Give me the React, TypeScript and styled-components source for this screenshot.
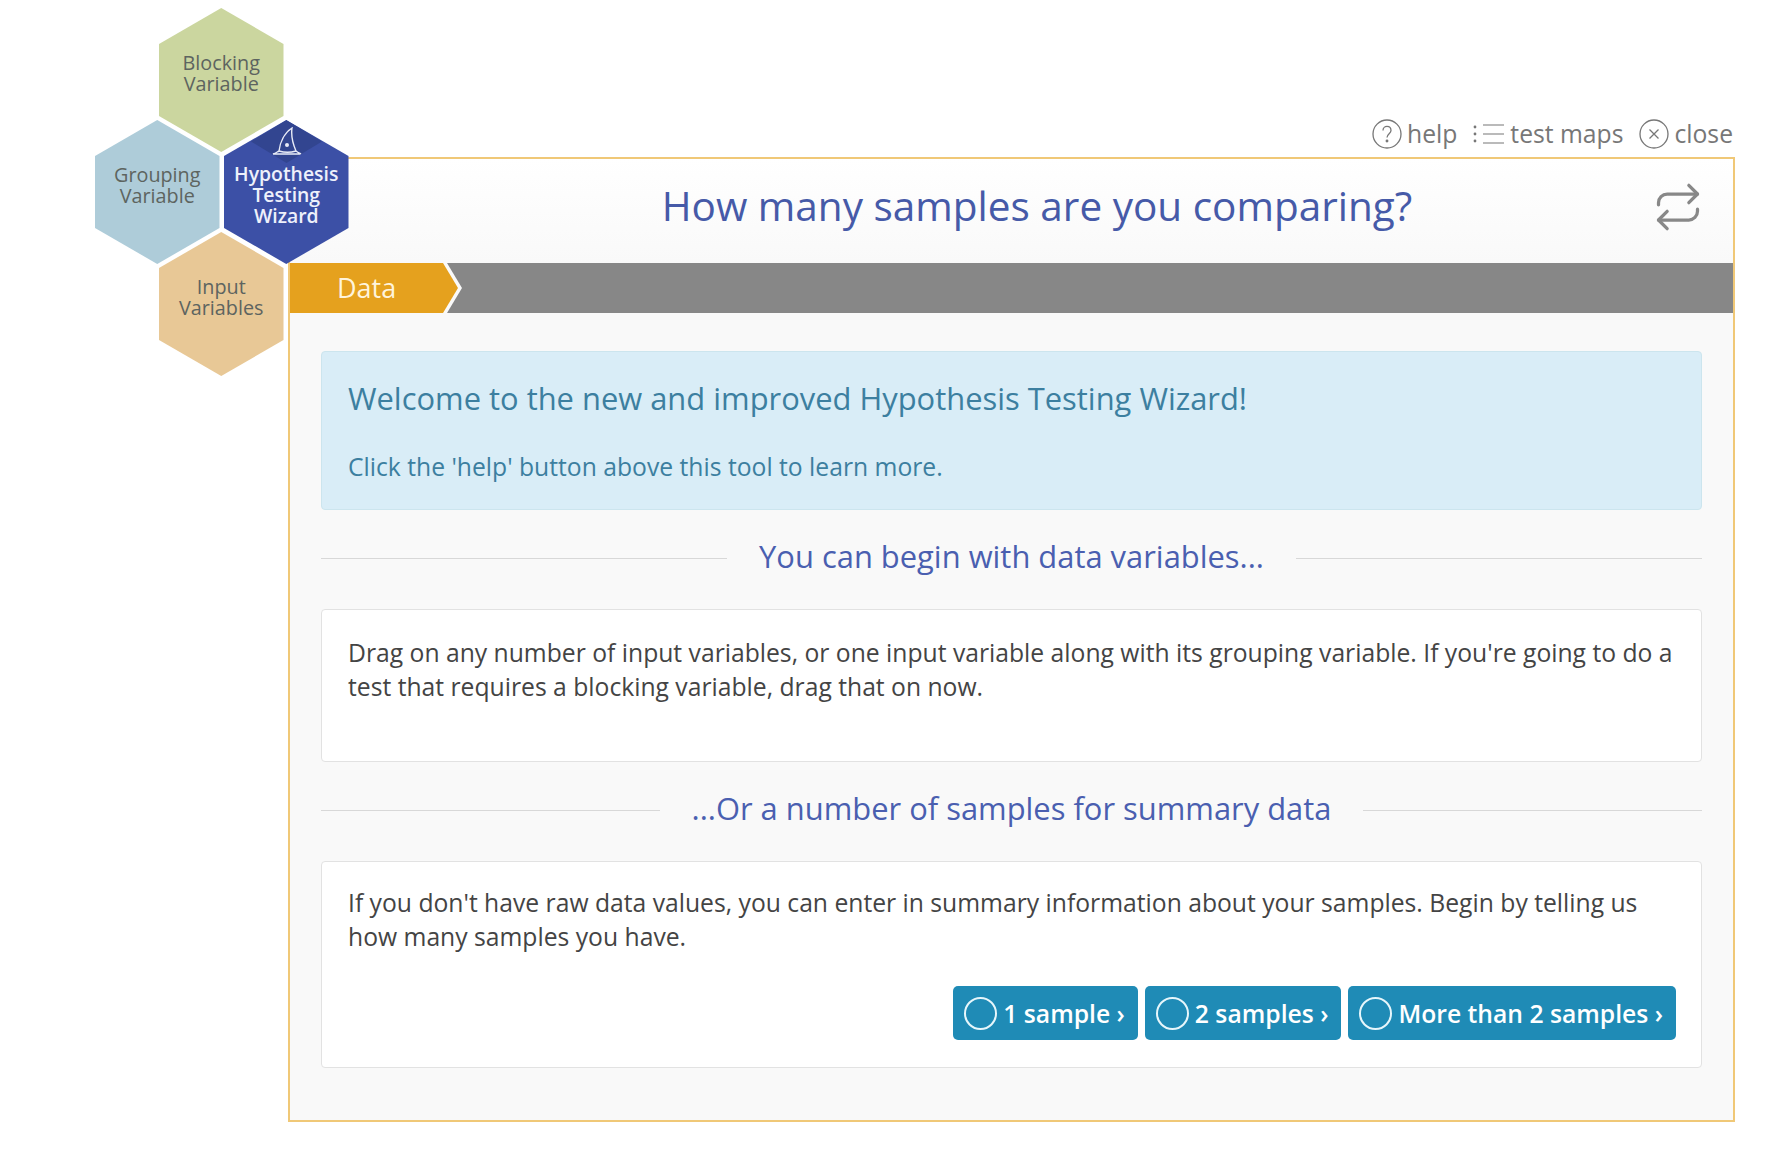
import React from 'react';
import styled, { createGlobalStyle } from 'styled-components';
import { Repeat } from 'lucide-react';

const GlobalStyle = createGlobalStyle`
  html, body {
    margin: 0;
    padding: 0;
    background: #fff;
    font-family: "Open Sans", "Noto Sans", sans-serif;
  }
`;

const Page = styled.div`
  position: relative;
  width: 1792px;
  height: 1152px;
  padding: 117px 57px 0 288px;
  box-sizing: border-box;
  overflow: hidden;
`;

const TopLinks = styled.div`
  display: flex;
  justify-content: flex-end;
  align-items: center;
  height: 40px;
  padding: 0 2px 6px 0;
  box-sizing: border-box;
`;

const TopLink = styled.div`
  display: flex;
  align-items: center;
  gap: 5px;
  margin-left: 16px;
  font-size: 24.7px;
  color: #777;
  line-height: 32px;
`;

const Panel = styled.section`
  height: 965px;
  border: 2px solid #f0c877;
  box-sizing: border-box;
  background: #f9f9f9;
`;

const Header = styled.header`
  display: flex;
  align-items: center;
  height: 104px;
  padding: 0 29px 12px 132px;
  box-sizing: border-box;
  background: linear-gradient(#fff, #f9f9f9);
`;

const Title = styled.h1`
  flex: 1;
  margin: 0;
  text-align: center;
  font-size: 40.5px;
  font-weight: 400;
  color: #465aa8;
`;

const SwapIcon = styled(Repeat)`
  margin-top: 4px;
`;

const StepBar = styled.div`
  height: 50px;
  background: #878787;
`;

const StepEdge = styled.div`
  width: 172px;
  height: 100%;
  background: #fafafa;
  clip-path: polygon(0 0, 157px 0, 100% 50%, 157px 100%, 0 100%);
`;

const StepTab = styled.div`
  width: 168px;
  height: 100%;
  padding-left: 47px;
  box-sizing: border-box;
  background: #e5a11e;
  clip-path: polygon(0 0, 153px 0, 100% 50%, 153px 100%, 0 100%);
  color: #fff4dc;
  font-size: 27px;
  font-weight: 500;
  line-height: 50px;
`;

const Content = styled.div`
  padding: 38px 31px 0;
`;

const Alert = styled.div`
  height: 159px;
  padding: 25px 26px 0;
  box-sizing: border-box;
  background: #d9edf7;
  border: 1px solid #cce5ee;
  border-radius: 4px;
  color: #3c7fa0;
`;

const AlertTitle = styled.div`
  font-size: 30.9px;
  line-height: 42px;
`;

const AlertText = styled.div`
  margin-top: 31px;
  font-size: 24.7px;
  line-height: 34px;
`;

const Divider = styled.div`
  display: flex;
  align-items: center;
  gap: 32px;
  height: 99px;
  padding-bottom: 2px;
  box-sizing: border-box;
  color: #4a5fb0;
  font-size: 30.9px;
  white-space: nowrap;

  &::before,
  &::after {
    content: '';
    flex: 1;
    height: 1px;
    background: #d8d8d8;
  }
`;

const DividerText = styled.span`
  margin-bottom: 5px;
`;

const Card = styled.div<{ $height: number; $top: number }>`
  height: ${(p) => p.$height}px;
  padding: ${(p) => p.$top}px 20px 0 26px;
  box-sizing: border-box;
  background: #fff;
  border: 1px solid #e2e2e2;
  border-radius: 4px;
  color: #444;
  font-size: 24.7px;
  line-height: 34px;
`;

const ButtonRow = styled.div`
  display: flex;
  justify-content: flex-end;
  gap: 7px;
  margin: 32px 5px 0 0;
`;

const SampleButton = styled.button`
  display: flex;
  align-items: center;
  gap: 6px;
  height: 54px;
  padding: 0 13px 0 11px;
  border: 0;
  border-radius: 5px;
  background: #1f8bb6;
  color: #fff;
  font-family: inherit;
  font-size: 24.7px;
  font-weight: 600;
`;

const Radio = styled.span`
  width: 33px;
  height: 33px;
  box-sizing: border-box;
  border: 2px solid #e6f6fb;
  border-radius: 50%;
`;

const Hex = styled.div<{ $left: number; $top: number; $bg: string }>`
  position: absolute;
  left: ${(p) => p.$left}px;
  top: ${(p) => p.$top}px;
  width: 124.5px;
  height: 144px;
  padding-bottom: 14px;
  box-sizing: border-box;
  display: flex;
  align-items: center;
  justify-content: center;
  text-align: center;
  background: ${(p) => p.$bg};
  clip-path: polygon(50% 0, 100% 25%, 100% 75%, 50% 100%, 0 75%, 0 25%);
  color: #5d6460;
  font-size: 19.8px;
  line-height: 21px;
`;

const WizardHex = styled(Hex)`
  padding: 5px 0 0;
  color: #eef1fb;
  font-weight: 600;
  font-size: 19.4px;
  line-height: 21px;
`;

const HatBadge = styled.div`
  position: absolute;
  top: 0;
  left: 27px;
  width: 71px;
  height: 43px;
  display: flex;
  align-items: center;
  justify-content: center;
  background: #324590;
  clip-path: polygon(50% 0, 100% 50%, 50% 100%, 0 50%);
`;

const CircleIcon = ({ children }: { children: React.ReactNode }) => (
  <svg width="30" height="30" viewBox="0 0 30 30" fill="none" stroke="#777" strokeWidth="1.3">
    <circle cx="15" cy="15" r="14" />
    {children}
  </svg>
);

const ListIcon = () => (
  <svg width="32" height="24" viewBox="0 0 32 24" fill="none" stroke="#777" strokeWidth="1.2">
    <circle cx="2" cy="5" r="1.4" fill="#777" stroke="none" />
    <circle cx="2" cy="12" r="1.4" fill="#777" stroke="none" />
    <circle cx="2" cy="19" r="1.4" fill="#777" stroke="none" />
    <path d="M10 3h21M10 12h21M10 21h21" />
  </svg>
);

const HatIcon = () => (
  <svg width="30" height="29" viewBox="0 0 30 29" fill="none" stroke="#e8ebf7" strokeWidth="1.4">
    <path d="M1 27c3-1 4-2 6-3 1-8 5-18 13-23-1 7 1 16 4 23 1 1 3 2 5 3z" />
    <path d="M7 24c5 1.500 12 1.500 17 0" />
    <circle cx="15" cy="18" r="2" fill="#e8ebf7" stroke="none" />
  </svg>
);

const SAMPLE_OPTIONS = ['1 sample ›', '2 samples ›', 'More than 2 samples ›'];

export default function App() {
  return (
    <Page>
      <GlobalStyle />
      <TopLinks>
        <TopLink>
          <CircleIcon>
            <path d="M11 11.500c0-5.500 8-5.500 8 0 0 3-4 3.500-4 7" />
            <circle cx="15" cy="22" r=".8" fill="#777" />
          </CircleIcon>
          help
        </TopLink>
        <TopLink>
          <ListIcon />
          test maps
        </TopLink>
        <TopLink>
          <CircleIcon>
            <path d="M10.500 10.500l9 9M19.500 10.500l-9 9" />
          </CircleIcon>
          close
        </TopLink>
      </TopLinks>
      <Panel>
        <Header>
          <Title>How many samples are you comparing?</Title>
          <SwapIcon size={52} color="#888" strokeWidth={1.5} />
        </Header>
        <StepBar>
          <StepEdge>
            <StepTab>Data</StepTab>
          </StepEdge>
        </StepBar>
        <Content>
          <Alert>
            <AlertTitle>Welcome to the new and improved Hypothesis Testing Wizard!</AlertTitle>
            <AlertText>Click the 'help' button above this tool to learn more.</AlertText>
          </Alert>
          <Divider>
            <DividerText>You can begin with data variables...</DividerText>
          </Divider>
          <Card $height={153} $top={26}>
            Drag on any number of input variables, or one input variable along with its grouping variable. If you're going to do a test that requires a blocking variable, drag that on now.
          </Card>
          <Divider>
            <DividerText>...Or a number of samples for summary data</DividerText>
          </Divider>
          <Card $height={207} $top={24}>
            If you don't have raw data values, you can enter in summary information about your samples. Begin by telling us how many samples you have.
            <ButtonRow>
              {SAMPLE_OPTIONS.map((label) => (
                <SampleButton key={label}>
                  <Radio />
                  {label}
                </SampleButton>
              ))}
            </ButtonRow>
          </Card>
        </Content>
      </Panel>
      <Hex $left={159} $top={8} $bg="#cbd69f">
        Blocking
        <br />
        Variable
      </Hex>
      <Hex $left={95} $top={120} $bg="#aeccd9">
        Grouping
        <br />
        Variable
      </Hex>
      <WizardHex $left={224} $top={120} $bg="#3c50a6">
        <HatBadge>
          <HatIcon />
        </HatBadge>
        <span>
          Hypothesis
          <br />
          Testing
          <br />
          Wizard
        </span>
      </WizardHex>
      <Hex $left={159} $top={232} $bg="#e8c896">
        Input
        <br />
        Variables
      </Hex>
    </Page>
  );
}
